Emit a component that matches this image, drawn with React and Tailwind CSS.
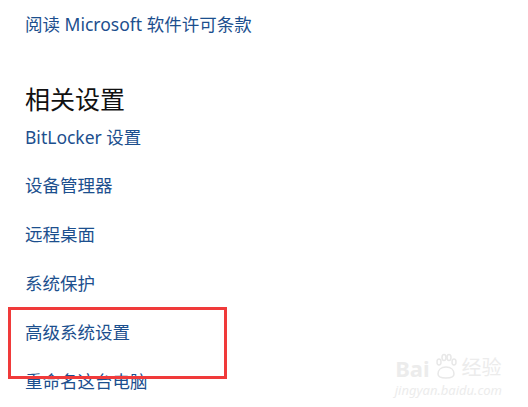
export default function App() {
  const links = ["设备管理器", "远程桌面", "系统保护", "高级系统设置", "重命名这台电脑"];

  return (
    <div
      className="relative w-[528px] h-[407px] overflow-hidden bg-white"
      style={{ fontFamily: '"Noto Sans", "Noto Sans CJK SC", sans-serif' }}
    >
      <div className="flex flex-col pl-[25px] pt-[11px]">
        <a className="text-[17.5px] leading-[26px] text-[#1c4f8e]">阅读 Microsoft 软件许可条款</a>

        <h2 className="mt-[47px] text-[25px] leading-[30px] text-[#111]">相关设置</h2>

        <a className="mt-[10px] text-[17.5px] leading-[26px] text-[#1c4f8e]">BitLocker 设置</a>

        <div className="flex flex-col gap-[23px] mt-[22px]">
          {links.map((t) => (
            <a key={t} className="text-[17.5px] leading-[26px] text-[#1c4f8e]">
              {t}
            </a>
          ))}
        </div>
      </div>

      {/* highlight box */}
      <div className="absolute left-[8px] top-[307px] w-[219px] h-[72px] border-[3px] border-[#f03a3a]" />

      {/* watermark */}
      <div className="absolute right-[26px] bottom-[10px] flex flex-col items-center text-[#ececec]">
        <div className="flex items-end gap-1">
          <span className="text-[22px] font-bold leading-[22px]">Bai</span>
          <svg width="24" height="26" viewBox="0 0 24 26" fill="none" stroke="#e8e8e8" strokeWidth="1.5">
            <ellipse cx="5" cy="9" rx="2" ry="3" />
            <ellipse cx="10" cy="4.5" rx="2" ry="3" />
            <ellipse cx="15" cy="4.5" rx="2" ry="3" />
            <ellipse cx="20" cy="9" rx="2" ry="3" />
            <path d="M4 21c0-4 3-7 8-7s8 3 8 7c0 3-3 4-8 4s-8-1-8-4z" />
          </svg>
          <span className="text-[20px] leading-[22px]">经验</span>
        </div>
        <span className="text-[13px] leading-[14px] mt-[4px] italic">jingyan.baidu.com</span>
      </div>
    </div>
  );
}
